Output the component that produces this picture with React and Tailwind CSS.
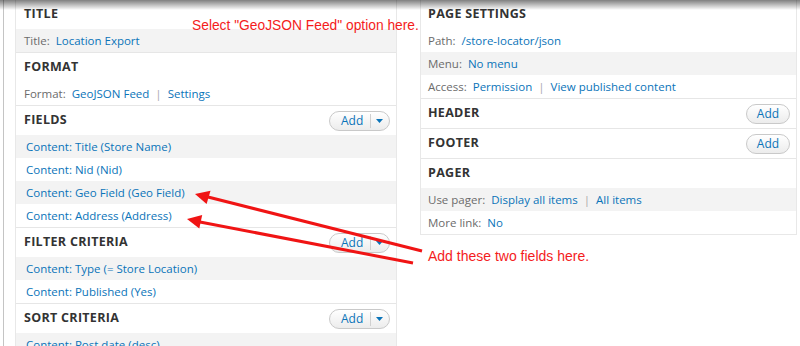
import React from "react";

const LINK = "text-[#0a74b9]";
const LABEL = "text-[#6b6b6b]";

function AddSplit() {
  return (
    <div className="flex h-[20px] w-[61px] items-center rounded-full border border-[#c9c9c9] bg-linear-to-b from-white to-[#ececec] text-[12px]">
      <span className={`pl-[11px] pr-[7px] ${LINK}`}>Add</span>
      <span className="h-[14px] border-l border-[#d0d0d0]" />
      <svg width="16" height="8" viewBox="0 0 16 8" className="ml-[1px]">
        <path d="M4 2 L11 2 L7.5 6 Z" fill="#0a74b9" />
      </svg>
    </div>
  );
}

function AddSimple() {
  return (
    <div className="flex h-[20px] w-[44px] items-center justify-center rounded-full border border-[#c9c9c9] bg-linear-to-b from-white to-[#ececec] text-[12px]">
      <span className={LINK}>Add</span>
    </div>
  );
}

function Heading({ children, add, pad = "pl-2" }) {
  return (
    <div className={`flex h-[29px] items-center justify-between ${pad} pr-[6px]`}>
      <span className="text-[12.5px] font-bold tracking-[0.3px] text-[#333]">{children}</span>
      {add === "split" && <AddSplit />}
      {add === "simple" && <AddSimple />}
    </div>
  );
}

function Row({ grey, children, pad = "pl-2" }) {
  return (
    <div className={`flex h-[23px] items-center ${pad} text-[11.5px] ${grey ? "bg-[#f3f3f3]" : ""}`}>
      {children}
    </div>
  );
}

function Sep() {
  return <span className="mx-[6px] text-[#aaa]">|</span>;
}

function Section({ children, last }) {
  return <div className={last ? "" : "border-b border-[#e6e6e6]"}>{children}</div>;
}

function Arrows() {
  return (
    <svg className="pointer-events-none absolute left-0 top-0" width="800" height="346">
      <line x1="422" y1="251" x2="208" y2="197" stroke="#f01414" strokeWidth="3" />
      <polygon points="195,194 210.5,190.8 206.6,204" fill="#f01414" />
      <line x1="413" y1="263" x2="200" y2="222" stroke="#f01414" strokeWidth="3" />
      <polygon points="187,219 202.2,215 199.3,228.4" fill="#f01414" />
    </svg>
  );
}

export default function App() {
  return (
    <div className="relative h-[346px] w-[800px] overflow-hidden bg-white font-['Open_Sans',sans-serif]">
      <div className="flex h-full">
        <div className="ml-[3px] h-full border-l border-[#c4c4c4] pl-[11px]">
          <div className="h-full w-[382px] border-x border-[#e8e8e8]">
            <Section>
              <Heading>TITLE</Heading>
              <Row grey>
                <span className={LABEL}>Title:</span>
                <span className={`ml-[6px] ${LINK}`}>Location Export</span>
              </Row>
            </Section>
            <Section>
              <Heading>FORMAT</Heading>
              <Row>
                <span className={LABEL}>Format:</span>
                <span className={`ml-[6px] ${LINK}`}>GeoJSON Feed</span>
                <Sep />
                <span className={LINK}>Settings</span>
              </Row>
            </Section>
            <Section>
              <Heading add="split">FIELDS</Heading>
              <Row grey pad="pl-[10px]"><span className={LINK}>Content: Title (Store Name)</span></Row>
              <Row pad="pl-[10px]"><span className={LINK}>Content: Nid (Nid)</span></Row>
              <Row grey pad="pl-[10px]"><span className={LINK}>Content: Geo Field (Geo Field)</span></Row>
              <Row pad="pl-[10px]"><span className={LINK}>Content: Address (Address)</span></Row>
            </Section>
            <Section>
              <Heading add="split">FILTER CRITERIA</Heading>
              <Row grey pad="pl-[10px]"><span className={LINK}>Content: Type (= Store Location)</span></Row>
              <Row pad="pl-[10px]"><span className={LINK}>Content: Published (Yes)</span></Row>
            </Section>
            <Section last>
              <Heading add="split">SORT CRITERIA</Heading>
              <Row grey pad="pl-[10px]"><span className={LINK}>Content: Post date (desc)</span></Row>
            </Section>
          </div>
        </div>
        <div className="ml-[23px] w-[377px] self-start border-x border-b border-[#e8e8e8]">
          <Section>
            <Heading pad="pl-[7px]">PAGE SETTINGS</Heading>
            <Row pad="pl-[7px]">
              <span className={LABEL}>Path:</span>
              <span className={`ml-[6px] ${LINK}`}>/store-locator/json</span>
            </Row>
            <Row grey pad="pl-[7px]">
              <span className={LABEL}>Menu:</span>
              <span className={`ml-[6px] ${LINK}`}>No menu</span>
            </Row>
            <Row pad="pl-[7px]">
              <span className={LABEL}>Access:</span>
              <span className={`ml-[6px] ${LINK}`}>Permission</span>
              <Sep />
              <span className={LINK}>View published content</span>
            </Row>
          </Section>
          <Section>
            <Heading add="simple" pad="pl-[7px]">HEADER</Heading>
          </Section>
          <Section>
            <Heading add="simple" pad="pl-[7px]">FOOTER</Heading>
          </Section>
          <Section last>
            <Heading pad="pl-[7px]">PAGER</Heading>
            <Row grey pad="pl-[7px]">
              <span className={LABEL}>Use pager:</span>
              <span className={`ml-[6px] ${LINK}`}>Display all items</span>
              <Sep />
              <span className={LINK}>All items</span>
            </Row>
            <Row pad="pl-[7px]">
              <span className={LABEL}>More link:</span>
              <span className={`ml-[6px] ${LINK}`}>No</span>
            </Row>
          </Section>
        </div>
      </div>

      <div className="pointer-events-none absolute left-0 top-0 h-[10px] w-full bg-linear-to-b from-black/50 to-transparent" />

      <span className="absolute left-[192px] top-[16px] font-['Liberation_Sans',sans-serif] text-[13.8px] text-[#f41c1c]">
        Select "GeoJSON Feed" option here.
      </span>
      <span className="absolute left-[428px] top-[246px] font-['Liberation_Sans',sans-serif] text-[14px] text-[#f41c1c]">
        Add these two fields here.
      </span>
      <Arrows />
    </div>
  );
}
